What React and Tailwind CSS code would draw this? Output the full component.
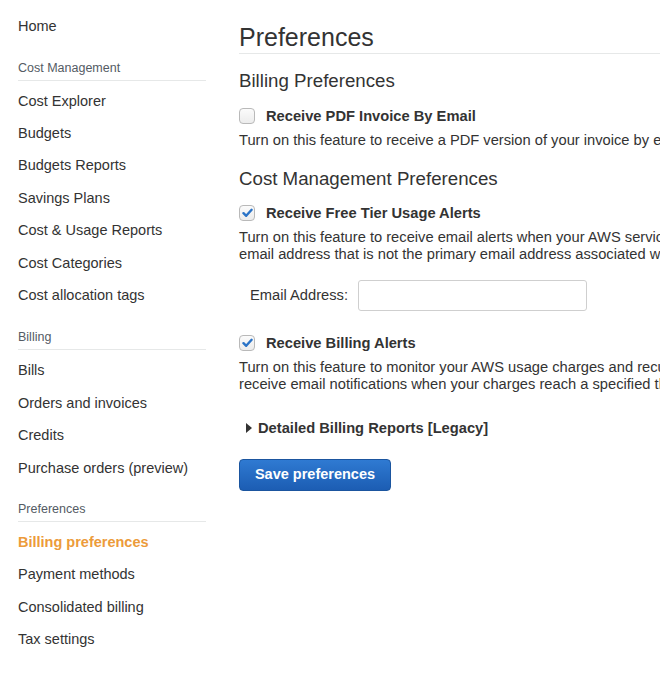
import {useState} from 'react'

const font = {fontFamily: '"Liberation Sans", Arial, Helvetica, sans-serif'}

const sections = [
  {title: null, items: ['Home']},
  {
    title: 'Cost Management',
    spacing: 'mt-[17px] mb-[4px]',
    items: [
      'Cost Explorer',
      'Budgets',
      'Budgets Reports',
      'Savings Plans',
      'Cost & Usage Reports',
      'Cost Categories',
      'Cost allocation tags'
    ]
  },
  {
    title: 'Billing',
    spacing: 'mt-[17px] mb-[5px]',
    items: ['Bills', 'Orders and invoices', 'Credits', 'Purchase orders (preview)']
  },
  {
    title: 'Preferences',
    spacing: 'mt-[16px] mb-[5px]',
    items: ['Billing preferences', 'Payment methods', 'Consolidated billing', 'Tax settings']
  }
]

const Sidebar = () => (
  <nav className="w-[206px] shrink-0 pl-[18px] pt-[11px]">
    {sections.map((section, i) => (
      <div key={i}>
        {section.title && (
          <div className={`${section.spacing} pb-[4px] border-b border-[#e6e8e8] text-[12.5px] leading-[16px] text-[#545b64]`}>
            {section.title}
          </div>
        )}
        {section.items.map((item) => (
          <div
            key={item}
            className={
              item === 'Billing preferences'
                ? 'h-[32.4px] flex items-center text-[14.5px] font-bold text-[#ec9b3a]'
                : 'h-[32.4px] flex items-center text-[14.5px] text-[#333]'
            }
          >
            {item}
          </div>
        ))}
      </div>
    ))}
  </nav>
)

const Checkbox = ({checked, onChange}) => (
  <button
    onClick={onChange}
    className="w-[16px] h-[16px] shrink-0 rounded-[4px] border border-[#b9b9b9] bg-gradient-to-b from-[#fbfbfb] to-[#ececec] flex items-center justify-center"
  >
    {checked && (
      <svg width="11" height="10" viewBox="0 0 11 10">
        <path d="M1.5 5.2 L4.2 7.8 L9.6 1.8" fill="none" stroke="#2a73c7" strokeWidth="2.4" strokeLinecap="round" strokeLinejoin="round" />
      </svg>
    )}
  </button>
)

const Option = ({label, checked, onChange, children}) => (
  <div>
    <label className="h-[20px] flex items-center gap-[11px] text-[14.7px] font-bold text-[#333]">
      <Checkbox checked={checked} onChange={onChange} />
      {label}
    </label>
    <div className="mt-[6px] text-[14.7px] leading-[17px] text-[#333] whitespace-nowrap">
      {children}
    </div>
  </div>
)

export default function App() {
  const [pdf, setPdf] = useState(false)
  const [freeTier, setFreeTier] = useState(true)
  const [billing, setBilling] = useState(true)

  return (
    <div className="w-[660px] h-[681px] overflow-hidden bg-white flex" style={font}>
      <Sidebar />
      <main className="w-[640px] shrink-0 pl-[33px] pt-[22px]">
        <h1 className="text-[25px] leading-[31px] text-[#333] border-b border-[#e6e8e8]">Preferences</h1>

        <h2 className="mt-[15px] text-[18.7px] leading-[24px] text-[#333]">Billing Preferences</h2>
        <div className="mt-[13px]">
          <Option label="Receive PDF Invoice By Email" checked={pdf} onChange={() => setPdf(!pdf)}>
            Turn on this feature to receive a PDF version of your invoice by email.
          </Option>
        </div>

        <h2 className="mt-[18px] text-[18.7px] leading-[24px] text-[#333]">Cost Management Preferences</h2>
        <div className="mt-[12px]">
          <Option label="Receive Free Tier Usage Alerts" checked={freeTier} onChange={() => setFreeTier(!freeTier)}>
            Turn on this feature to receive email alerts when your AWS service usage is approaching, or has exceeded, the AWS Free Tier usage limits.
            <br />
            email address that is not the primary email address associated with this account, specify the email address below.
          </Option>
        </div>

        <div className="mt-[17px] ml-[11px] flex items-center gap-[10px]">
          <span className="text-[14.7px] text-[#333]">Email Address:</span>
          <input className="w-[229px] h-[31px] rounded-[3px] border border-[#cfcfcf] px-2 text-[14px] outline-none" />
        </div>

        <div className="mt-[22px]">
          <Option label="Receive Billing Alerts" checked={billing} onChange={() => setBilling(!billing)}>
            Turn on this feature to monitor your AWS usage charges and recurring fees automatically, making it easier to track and manage your spending on AWS. You can set up billing alerts to
            <br />
            receive email notifications when your charges reach a specified threshold.
          </Option>
        </div>

        <div className="mt-[24px] ml-[7px] flex items-center gap-[6px] text-[14.7px] font-bold text-[#333]">
          <svg width="6" height="10" viewBox="0 0 6 10">
            <path d="M0 0 L6 5 L0 10 Z" fill="#333" />
          </svg>
          Detailed Billing Reports [Legacy]
        </div>

        <button className="mt-[20px] w-[152px] h-[32px] rounded-[4px] border border-[#1b559f] bg-gradient-to-b from-[#2f7ad2] to-[#1c5db3] text-white text-[14.5px] font-bold">
          Save preferences
        </button>
      </main>
    </div>
  )
}
